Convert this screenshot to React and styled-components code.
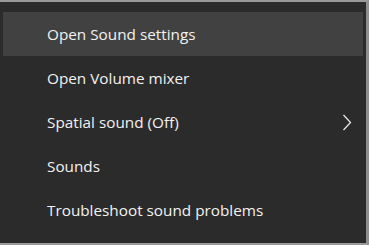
import React from 'react'
import styled, { createGlobalStyle } from 'styled-components'

const Global = createGlobalStyle`
  html, body { margin: 0; padding: 0; background: #2b2b2b; }
  body { width: 369px; height: 245px; overflow: hidden; }
`

const items = [
  { label: 'Open Sound settings', active: true },
  { label: 'Open Volume mixer' },
  { label: 'Spatial sound (Off)', sub: true },
  { label: 'Sounds' },
  { label: 'Troubleshoot sound problems' },
]

function Chevron() {
  return (
    <svg width="10" height="17" viewBox="0 0 10 17">
      <path d="M1.5 1 L8.5 8.5 L1.5 16" fill="none" stroke="#e6e6e6" strokeWidth="1.3" />
    </svg>
  )
}

function App() {
  return (
    <>
      <Global />
      <Menu>
        {items.map((it) => (
          <Item key={it.label} active={it.active}>
            <Label>{it.label}</Label>
            {it.sub && <Arrow><Chevron /></Arrow>}
          </Item>
        ))}
      </Menu>
    </>
  )
}

export default App

const Menu = styled.div`
  box-sizing: border-box;
  width: 369px;
  height: 245px;
  background: #2b2b2b;
  border-top: 2px solid #9a9a9a;
  border-right: 3px solid #8e8e8e;
  border-bottom: 2px solid #9a9a9a;
  padding: 10px 3px 0 3px;
  display: flex;
  flex-direction: column;
`

const Item = styled.div`
  height: 44px;
  flex-shrink: 0;
  display: flex;
  align-items: center;
  padding-left: 44px;
  padding-right: 11px;
  background: ${(p) => (p.active ? '#414141' : 'transparent')};
`

const Label = styled.span`
  flex: 1;
  font-family: 'Open Sans', 'Noto Sans', sans-serif;
  font-size: 15.3px;
  color: #f2f2f2;
  white-space: nowrap;
`

const Arrow = styled.span`
  display: flex;
  align-items: center;
`
